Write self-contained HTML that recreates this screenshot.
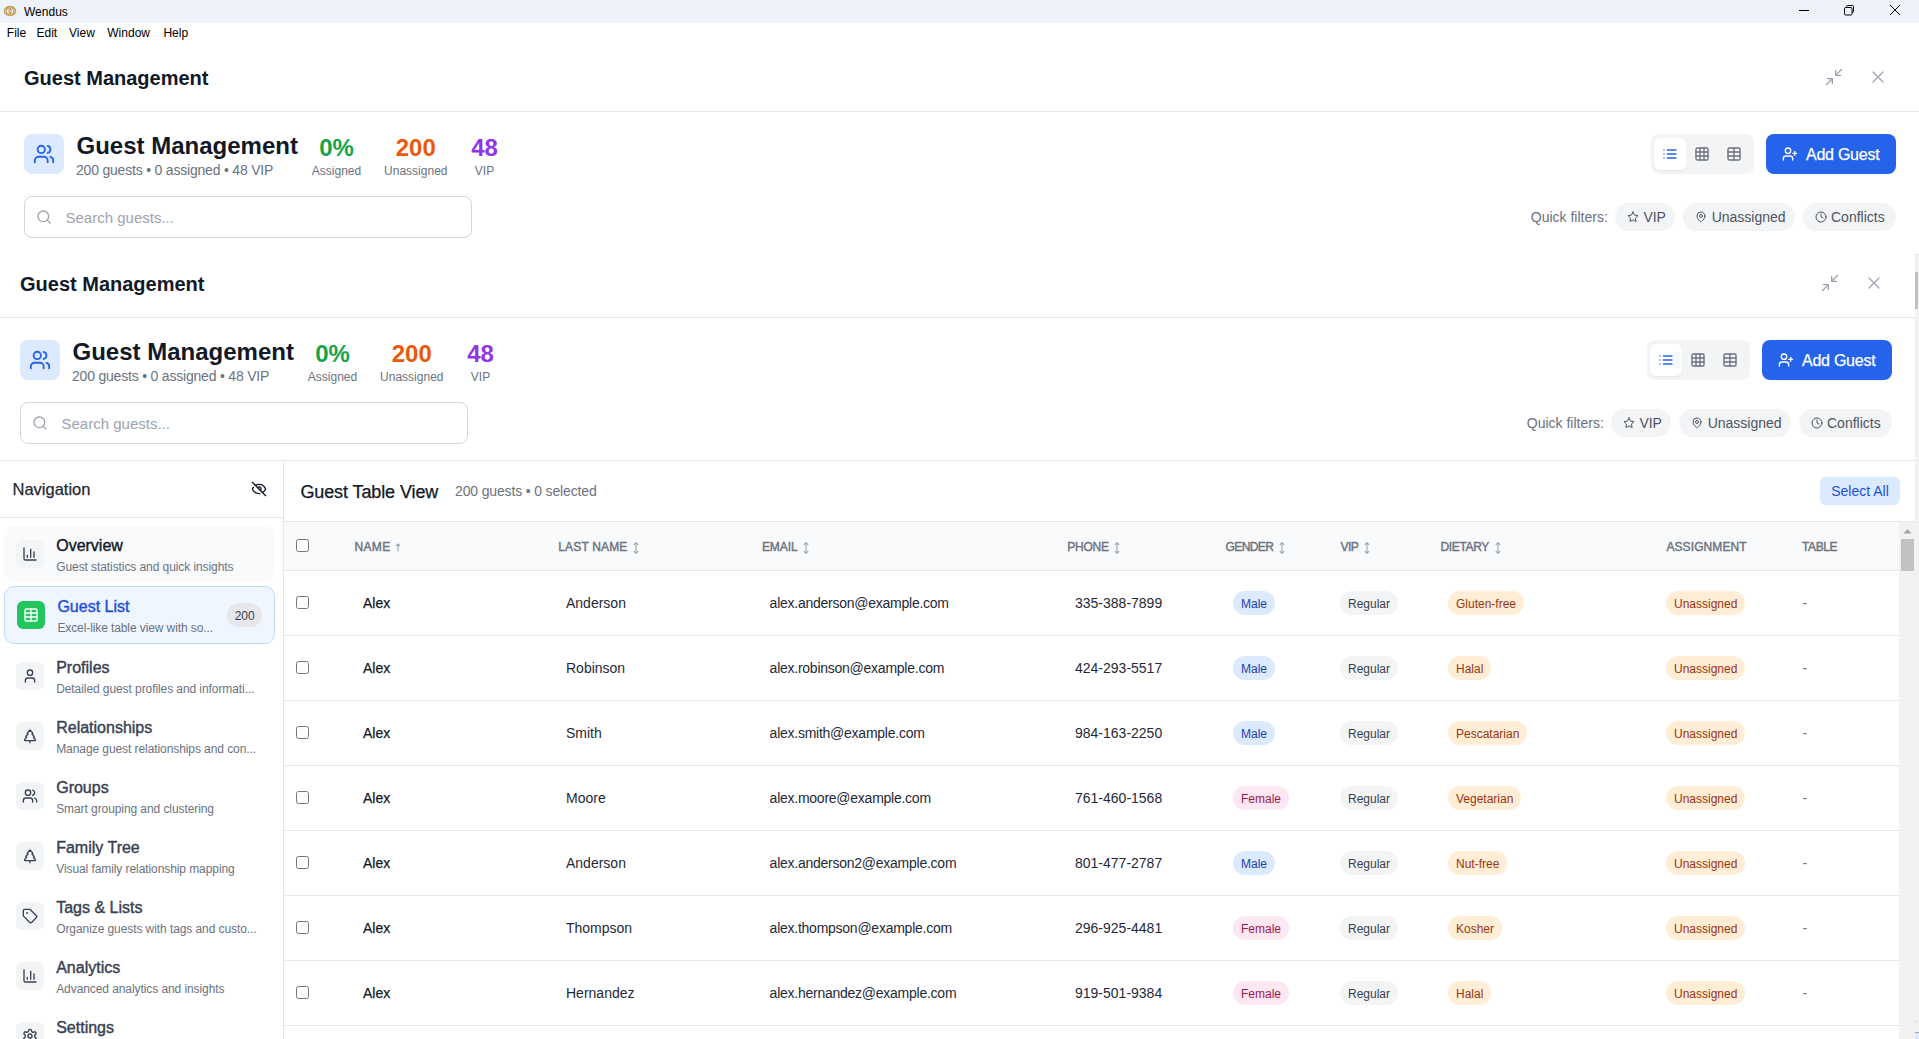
<!DOCTYPE html><html><head><meta charset="utf-8"><style>
*{margin:0;padding:0}
html,body{width:1919px;height:1039px;overflow:hidden;background:#fff;font-family:"Liberation Sans",sans-serif}
.t{position:absolute;line-height:1;white-space:nowrap}
.c{text-align:center}
.b{position:absolute}
.ic{position:absolute;display:block}
.pill{position:absolute;height:24px;line-height:26px;box-sizing:border-box;font-size:12px;padding:0 8px;border-radius:12px;white-space:nowrap}
</style></head><body><div class="b" style="left:0px;top:0px;width:1919px;height:23px;background:#eef2f9"></div><svg class="ic" style="left:3px;top:5px;width:14px;height:12px" viewBox="0 0 14 12"><ellipse cx="7" cy="6" rx="5.6" ry="4.4" fill="none" stroke="#c9a060" stroke-width="1.5"/><ellipse cx="5.6" cy="6" rx="2.4" ry="3.1" fill="none" stroke="#c9a060" stroke-width="1.1"/><ellipse cx="8.4" cy="6" rx="2.4" ry="3.1" fill="none" stroke="#c9a060" stroke-width="1.1"/></svg><div class="t" style="left:24px;top:5.7px;font-size:12px;color:#000;font-weight:400">Wendus</div><div class="b" style="left:1799px;top:10px;width:10px;height:1px;background:#000"></div><svg class="ic" style="left:1843px;top:4px;width:12px;height:12px" viewBox="0 0 12 12" fill="none" stroke="#000" stroke-width="1"><rect x="1.5" y="3.5" width="7.5" height="7.5" rx="1.2"/><path d="M3.5 3.5V2.7A1.2 1.2 0 0 1 4.7 1.5H9.3A1.2 1.2 0 0 1 10.5 2.7V7.3A1.2 1.2 0 0 1 9.3 8.5H9"/></svg><svg class="ic" style="left:1889px;top:4px;width:12px;height:12px" viewBox="0 0 12 12" fill="none" stroke="#000" stroke-width="1"><path d="M1 1L11 11M11 1L1 11"/></svg><div class="t" style="left:6.8px;top:26.5px;font-size:12px;color:#000;font-weight:400">File</div><div class="t" style="left:36.5px;top:26.5px;font-size:12px;color:#000;font-weight:400">Edit</div><div class="t" style="left:69px;top:26.5px;font-size:12px;color:#000;font-weight:400">View</div><div class="t" style="left:107.3px;top:26.5px;font-size:12px;color:#000;font-weight:400">Window</div><div class="t" style="left:163.4px;top:26.5px;font-size:12px;color:#000;font-weight:400">Help</div><div class="t" style="left:24px;top:68.4px;font-size:20px;color:#111827;font-weight:700">Guest Management</div><svg class="ic" style="left:1824.3px;top:67px;width:20px;height:20px;color:#9ca3af" viewBox="0 0 24 24" fill="none" stroke="currentColor" stroke-width="1.6" stroke-linecap="round" stroke-linejoin="round"><polyline points="4 14 10 14 10 20"/><polyline points="20 10 14 10 14 4"/><line x1="14" x2="21" y1="10" y2="3"/><line x1="3" x2="10" y1="21" y2="14"/></svg><svg class="ic" style="left:1868px;top:66.75px;width:20px;height:20px;color:#9ca3af" viewBox="0 0 24 24" fill="none" stroke="currentColor" stroke-width="1.5" stroke-linecap="round" stroke-linejoin="round"><path d="M18 6 6 18"/><path d="m6 6 12 12"/></svg><div class="b" style="left:0px;top:111px;width:1920px;height:1px;background:#e5e7eb"></div><div class="b" style="left:24px;top:134px;width:40px;height:40px;background:#dbeafe;border-radius:8px"></div><svg class="ic" style="left:33px;top:142.5px;width:22px;height:22px;color:#2563eb" viewBox="0 0 24 24" fill="none" stroke="currentColor" stroke-width="2" stroke-linecap="round" stroke-linejoin="round"><path d="M16 21v-2a4 4 0 0 0-4-4H6a4 4 0 0 0-4 4v2"/><circle cx="9" cy="7" r="4"/><path d="M22 21v-2a4 4 0 0 0-3-3.87"/><path d="M16 3.13a4 4 0 0 1 0 7.75"/></svg><div class="t" style="left:76.5px;top:134.4px;font-size:24px;color:#111827;font-weight:700">Guest Management</div><div class="t" style="left:76px;top:163.2px;font-size:14px;color:#6b7280;font-weight:400;letter-spacing:-0.2px">200 guests &bull; 0 assigned &bull; 48 VIP</div><div class="t c" style="left:276.5px;top:135.7px;width:120px;font-size:24px;color:#16a34a;font-weight:700">0%</div><div class="t c" style="left:276.5px;top:164.7px;width:120px;font-size:12px;color:#6b7280">Assigned</div><div class="t c" style="left:355.8px;top:135.7px;width:120px;font-size:24px;color:#ea580c;font-weight:700">200</div><div class="t c" style="left:355.8px;top:164.7px;width:120px;font-size:12px;color:#6b7280">Unassigned</div><div class="t c" style="left:424.5px;top:135.7px;width:120px;font-size:24px;color:#9333ea;font-weight:700">48</div><div class="t c" style="left:424.5px;top:164.7px;width:120px;font-size:12px;color:#6b7280">VIP</div><div class="b" style="left:1651px;top:134px;width:103px;height:40px;background:#f3f4f6;border-radius:8px"></div><div class="b" style="left:1654px;top:138px;width:32px;height:32px;background:#fff;border-radius:6px;box-shadow:0 1px 2px rgba(0,0,0,.06)"></div><svg class="ic" style="left:1662px;top:146px;width:16px;height:16px;color:#2563eb" viewBox="0 0 24 24" fill="none" stroke="currentColor" stroke-width="2" stroke-linecap="round" stroke-linejoin="round"><line x1="8" x2="21" y1="6" y2="6"/><line x1="8" x2="21" y1="12" y2="12"/><line x1="8" x2="21" y1="18" y2="18"/><line x1="3" x2="3.01" y1="6" y2="6"/><line x1="3" x2="3.01" y1="12" y2="12"/><line x1="3" x2="3.01" y1="18" y2="18"/></svg><svg class="ic" style="left:1694px;top:146px;width:16px;height:16px;color:#6b7280" viewBox="0 0 24 24" fill="none" stroke="currentColor" stroke-width="2" stroke-linecap="round" stroke-linejoin="round"><rect width="18" height="18" x="3" y="3" rx="2"/><path d="M3 9h18"/><path d="M3 15h18"/><path d="M9 3v18"/><path d="M15 3v18"/></svg><svg class="ic" style="left:1726px;top:146px;width:16px;height:16px;color:#6b7280" viewBox="0 0 24 24" fill="none" stroke="currentColor" stroke-width="2" stroke-linecap="round" stroke-linejoin="round"><rect width="18" height="18" x="3" y="3" rx="2"/><path d="M3 9h18"/><path d="M3 15h18"/><path d="M12 3v18"/></svg><div class="b" style="left:1766px;top:134px;width:130px;height:40px;background:#2563eb;border-radius:8px"></div><svg class="ic" style="left:1782px;top:146px;width:16px;height:16px;color:#ffffff" viewBox="0 0 24 24" fill="none" stroke="currentColor" stroke-width="2" stroke-linecap="round" stroke-linejoin="round"><path d="M16 21v-2a4 4 0 0 0-4-4H6a4 4 0 0 0-4 4v2"/><circle cx="9" cy="7" r="4"/><line x1="19" x2="19" y1="8" y2="14"/><line x1="22" x2="16" y1="11" y2="11"/></svg><div class="t" style="left:1806px;top:146.5px;font-size:16px;color:#ffffff;font-weight:400;-webkit-text-stroke:0.25px #ffffff;letter-spacing:-0.25px">Add Guest</div><div class="b" style="left:24px;top:196px;width:448px;height:42px;border:1px solid #d1d5db;border-radius:8px;box-sizing:border-box;background:#fff"></div><svg class="ic" style="left:36px;top:209px;width:16px;height:16px;color:#9ca3af" viewBox="0 0 24 24" fill="none" stroke="currentColor" stroke-width="2" stroke-linecap="round" stroke-linejoin="round"><circle cx="11" cy="11" r="8"/><path d="m21 21-4.3-4.3"/></svg><div class="t" style="left:65.5px;top:210.3px;font-size:15px;color:#9ca3af;font-weight:400">Search guests...</div><div class="t" style="left:1530.8px;top:209.9px;font-size:14px;color:#6b7280;font-weight:400">Quick filters:</div><div class="b" style="left:1615px;top:203px;width:60px;height:28px;background:#f3f4f6;border-radius:14px"></div><svg class="ic" style="left:1627px;top:211px;width:12px;height:12px;color:#4b5563" viewBox="0 0 24 24" fill="none" stroke="currentColor" stroke-width="2" stroke-linecap="round" stroke-linejoin="round"><polygon points="12 2 15.09 8.26 22 9.27 17 14.14 18.18 21.02 12 17.77 5.82 21.02 7 14.14 2 9.27 8.91 8.26 12 2"/></svg><div class="t" style="left:1643.4px;top:210.2px;font-size:14px;color:#4b5563;font-weight:400">VIP</div><div class="b" style="left:1683px;top:203px;width:112px;height:28px;background:#f3f4f6;border-radius:14px"></div><svg class="ic" style="left:1695px;top:211px;width:12px;height:12px;color:#4b5563" viewBox="0 0 24 24" fill="none" stroke="currentColor" stroke-width="2" stroke-linecap="round" stroke-linejoin="round"><path d="M20 10c0 6-8 12-8 12s-8-6-8-12a8 8 0 0 1 16 0Z"/><circle cx="12" cy="10" r="3"/></svg><div class="t" style="left:1711.7px;top:210.2px;font-size:14px;color:#4b5563;font-weight:400">Unassigned</div><div class="b" style="left:1803px;top:203px;width:93px;height:28px;background:#f3f4f6;border-radius:14px"></div><svg class="ic" style="left:1815px;top:211px;width:12px;height:12px;color:#4b5563" viewBox="0 0 24 24" fill="none" stroke="currentColor" stroke-width="2" stroke-linecap="round" stroke-linejoin="round"><circle cx="12" cy="12" r="10"/><polyline points="12 6 12 12 16 14"/></svg><div class="t" style="left:1831px;top:210.2px;font-size:14px;color:#4b5563;font-weight:400">Conflicts</div><div class="b" style="left:0px;top:254px;width:1924px;height:1px;background:#e5e7eb"></div><div class="b" style="left:0;top:254px;width:1915px;height:785px;overflow:hidden;background:#fff"><div class="b" style="left:0;top:-254px;width:1915px;height:1039px"><div class="t" style="left:20px;top:274.4px;font-size:20px;color:#111827;font-weight:700">Guest Management</div><svg class="ic" style="left:1820.3px;top:273px;width:20px;height:20px;color:#9ca3af" viewBox="0 0 24 24" fill="none" stroke="currentColor" stroke-width="1.6" stroke-linecap="round" stroke-linejoin="round"><polyline points="4 14 10 14 10 20"/><polyline points="20 10 14 10 14 4"/><line x1="14" x2="21" y1="10" y2="3"/><line x1="3" x2="10" y1="21" y2="14"/></svg><svg class="ic" style="left:1864px;top:272.75px;width:20px;height:20px;color:#9ca3af" viewBox="0 0 24 24" fill="none" stroke="currentColor" stroke-width="1.5" stroke-linecap="round" stroke-linejoin="round"><path d="M18 6 6 18"/><path d="m6 6 12 12"/></svg><div class="b" style="left:-4px;top:317px;width:1920px;height:1px;background:#e5e7eb"></div><div class="b" style="left:20px;top:340px;width:40px;height:40px;background:#dbeafe;border-radius:8px"></div><svg class="ic" style="left:29px;top:348.5px;width:22px;height:22px;color:#2563eb" viewBox="0 0 24 24" fill="none" stroke="currentColor" stroke-width="2" stroke-linecap="round" stroke-linejoin="round"><path d="M16 21v-2a4 4 0 0 0-4-4H6a4 4 0 0 0-4 4v2"/><circle cx="9" cy="7" r="4"/><path d="M22 21v-2a4 4 0 0 0-3-3.87"/><path d="M16 3.13a4 4 0 0 1 0 7.75"/></svg><div class="t" style="left:72.5px;top:340.4px;font-size:24px;color:#111827;font-weight:700">Guest Management</div><div class="t" style="left:72px;top:369.2px;font-size:14px;color:#6b7280;font-weight:400;letter-spacing:-0.2px">200 guests &bull; 0 assigned &bull; 48 VIP</div><div class="t c" style="left:272.5px;top:341.7px;width:120px;font-size:24px;color:#16a34a;font-weight:700">0%</div><div class="t c" style="left:272.5px;top:370.7px;width:120px;font-size:12px;color:#6b7280">Assigned</div><div class="t c" style="left:351.8px;top:341.7px;width:120px;font-size:24px;color:#ea580c;font-weight:700">200</div><div class="t c" style="left:351.8px;top:370.7px;width:120px;font-size:12px;color:#6b7280">Unassigned</div><div class="t c" style="left:420.5px;top:341.7px;width:120px;font-size:24px;color:#9333ea;font-weight:700">48</div><div class="t c" style="left:420.5px;top:370.7px;width:120px;font-size:12px;color:#6b7280">VIP</div><div class="b" style="left:1647px;top:340px;width:103px;height:40px;background:#f3f4f6;border-radius:8px"></div><div class="b" style="left:1650px;top:344px;width:32px;height:32px;background:#fff;border-radius:6px;box-shadow:0 1px 2px rgba(0,0,0,.06)"></div><svg class="ic" style="left:1658px;top:352px;width:16px;height:16px;color:#2563eb" viewBox="0 0 24 24" fill="none" stroke="currentColor" stroke-width="2" stroke-linecap="round" stroke-linejoin="round"><line x1="8" x2="21" y1="6" y2="6"/><line x1="8" x2="21" y1="12" y2="12"/><line x1="8" x2="21" y1="18" y2="18"/><line x1="3" x2="3.01" y1="6" y2="6"/><line x1="3" x2="3.01" y1="12" y2="12"/><line x1="3" x2="3.01" y1="18" y2="18"/></svg><svg class="ic" style="left:1690px;top:352px;width:16px;height:16px;color:#6b7280" viewBox="0 0 24 24" fill="none" stroke="currentColor" stroke-width="2" stroke-linecap="round" stroke-linejoin="round"><rect width="18" height="18" x="3" y="3" rx="2"/><path d="M3 9h18"/><path d="M3 15h18"/><path d="M9 3v18"/><path d="M15 3v18"/></svg><svg class="ic" style="left:1722px;top:352px;width:16px;height:16px;color:#6b7280" viewBox="0 0 24 24" fill="none" stroke="currentColor" stroke-width="2" stroke-linecap="round" stroke-linejoin="round"><rect width="18" height="18" x="3" y="3" rx="2"/><path d="M3 9h18"/><path d="M3 15h18"/><path d="M12 3v18"/></svg><div class="b" style="left:1762px;top:340px;width:130px;height:40px;background:#2563eb;border-radius:8px"></div><svg class="ic" style="left:1778px;top:352px;width:16px;height:16px;color:#ffffff" viewBox="0 0 24 24" fill="none" stroke="currentColor" stroke-width="2" stroke-linecap="round" stroke-linejoin="round"><path d="M16 21v-2a4 4 0 0 0-4-4H6a4 4 0 0 0-4 4v2"/><circle cx="9" cy="7" r="4"/><line x1="19" x2="19" y1="8" y2="14"/><line x1="22" x2="16" y1="11" y2="11"/></svg><div class="t" style="left:1802px;top:352.5px;font-size:16px;color:#ffffff;font-weight:400;-webkit-text-stroke:0.25px #ffffff;letter-spacing:-0.25px">Add Guest</div><div class="b" style="left:20px;top:402px;width:448px;height:42px;border:1px solid #d1d5db;border-radius:8px;box-sizing:border-box;background:#fff"></div><svg class="ic" style="left:32px;top:415px;width:16px;height:16px;color:#9ca3af" viewBox="0 0 24 24" fill="none" stroke="currentColor" stroke-width="2" stroke-linecap="round" stroke-linejoin="round"><circle cx="11" cy="11" r="8"/><path d="m21 21-4.3-4.3"/></svg><div class="t" style="left:61.5px;top:416.3px;font-size:15px;color:#9ca3af;font-weight:400">Search guests...</div><div class="t" style="left:1526.8px;top:415.9px;font-size:14px;color:#6b7280;font-weight:400">Quick filters:</div><div class="b" style="left:1611px;top:409px;width:60px;height:28px;background:#f3f4f6;border-radius:14px"></div><svg class="ic" style="left:1623px;top:417px;width:12px;height:12px;color:#4b5563" viewBox="0 0 24 24" fill="none" stroke="currentColor" stroke-width="2" stroke-linecap="round" stroke-linejoin="round"><polygon points="12 2 15.09 8.26 22 9.27 17 14.14 18.18 21.02 12 17.77 5.82 21.02 7 14.14 2 9.27 8.91 8.26 12 2"/></svg><div class="t" style="left:1639.4px;top:416.2px;font-size:14px;color:#4b5563;font-weight:400">VIP</div><div class="b" style="left:1679px;top:409px;width:112px;height:28px;background:#f3f4f6;border-radius:14px"></div><svg class="ic" style="left:1691px;top:417px;width:12px;height:12px;color:#4b5563" viewBox="0 0 24 24" fill="none" stroke="currentColor" stroke-width="2" stroke-linecap="round" stroke-linejoin="round"><path d="M20 10c0 6-8 12-8 12s-8-6-8-12a8 8 0 0 1 16 0Z"/><circle cx="12" cy="10" r="3"/></svg><div class="t" style="left:1707.7px;top:416.2px;font-size:14px;color:#4b5563;font-weight:400">Unassigned</div><div class="b" style="left:1799px;top:409px;width:93px;height:28px;background:#f3f4f6;border-radius:14px"></div><svg class="ic" style="left:1811px;top:417px;width:12px;height:12px;color:#4b5563" viewBox="0 0 24 24" fill="none" stroke="currentColor" stroke-width="2" stroke-linecap="round" stroke-linejoin="round"><circle cx="12" cy="12" r="10"/><polyline points="12 6 12 12 16 14"/></svg><div class="t" style="left:1827px;top:416.2px;font-size:14px;color:#4b5563;font-weight:400">Conflicts</div><div class="b" style="left:-4px;top:460px;width:1924px;height:1px;background:#e5e7eb"></div><div class="b" style="left:283px;top:461px;width:1px;height:600px;background:#e5e7eb"></div><div class="t" style="left:12.5px;top:481.3px;font-size:16.5px;color:#1f2937;font-weight:400;-webkit-text-stroke:0.25px #1f2937">Navigation</div><svg class="ic" style="left:251px;top:481px;width:16px;height:16px;color:#111827;transform:rotate(180deg)" viewBox="0 0 24 24" fill="none" stroke="currentColor" stroke-width="2" stroke-linecap="round" stroke-linejoin="round"><path d="M9.88 9.88a3 3 0 1 0 4.24 4.24"/><path d="M10.73 5.08A10.43 10.43 0 0 1 12 5c7 0 10 7 10 7a13.16 13.16 0 0 1-1.67 2.68"/><path d="M6.61 6.61A13.526 13.526 0 0 0 2 12s3 7 10 7a9.74 9.74 0 0 0 5.39-1.61"/><line x1="2" x2="22" y1="2" y2="22"/></svg><div class="b" style="left:0px;top:517px;width:283px;height:1px;background:#e5e7eb"></div><div class="b" style="left:4px;top:526px;width:271px;height:56px;background:#f9fafb;border-radius:10px"></div><div class="b" style="left:16px;top:540px;width:28px;height:28px;background:#f3f4f6;border-radius:6px"></div><svg class="ic" style="left:22px;top:546px;width:16px;height:16px;color:#374151" viewBox="0 0 24 24" fill="none" stroke="currentColor" stroke-width="2" stroke-linecap="round" stroke-linejoin="round"><path d="M3 3v16a2 2 0 0 0 2 2h16"/><path d="M18 17V9"/><path d="M13 17V5"/><path d="M8 17v-3"/></svg><div class="t" style="left:56.2px;top:538.46px;font-size:16px;color:#111827;font-weight:400;-webkit-text-stroke:0.4px #111827">Overview</div><div class="t" style="left:56.2px;top:560.84px;font-size:12px;color:#6b7280;font-weight:400;letter-spacing:-0.08px">Guest statistics and quick insights</div><div class="b" style="left:4px;top:586px;width:271px;height:58px;background:#eff6ff;border:1px solid #bfdbfe;border-radius:10px;box-sizing:border-box"></div><div class="b" style="left:17px;top:601px;width:28px;height:28px;background:#22c55e;border-radius:6px"></div><svg class="ic" style="left:23px;top:607px;width:16px;height:16px;color:#ffffff" viewBox="0 0 24 24" fill="none" stroke="currentColor" stroke-width="2" stroke-linecap="round" stroke-linejoin="round"><rect width="18" height="18" x="3" y="3" rx="2"/><path d="M3 9h18"/><path d="M3 15h18"/><path d="M12 3v18"/></svg><div class="t" style="left:57.4px;top:599.46px;font-size:16px;color:#1d4ed8;font-weight:400;-webkit-text-stroke:0.4px #1d4ed8">Guest List</div><div class="t" style="left:57.4px;top:621.84px;font-size:12px;color:#6b7280;font-weight:400;letter-spacing:-0.1px">Excel-like table view with so...</div><div class="t c" style="left:227.4px;top:603px;width:34.6px;height:24px;line-height:26.5px;border-radius:12px;background:#e5e7eb;font-size:12px;color:#374151">200</div><div class="b" style="left:16px;top:662px;width:28px;height:28px;background:#f3f4f6;border-radius:6px"></div><svg class="ic" style="left:22px;top:668px;width:16px;height:16px;color:#374151" viewBox="0 0 24 24" fill="none" stroke="currentColor" stroke-width="2" stroke-linecap="round" stroke-linejoin="round"><path d="M19 21v-2a4 4 0 0 0-4-4H9a4 4 0 0 0-4 4v2"/><circle cx="12" cy="7" r="4"/></svg><div class="t" style="left:56.2px;top:660.46px;font-size:16px;color:#374151;font-weight:400;-webkit-text-stroke:0.4px #374151">Profiles</div><div class="t" style="left:56.2px;top:682.84px;font-size:12px;color:#6b7280;font-weight:400;letter-spacing:-0.08px">Detailed guest profiles and informati...</div><div class="b" style="left:16px;top:722px;width:28px;height:28px;background:#f3f4f6;border-radius:6px"></div><svg class="ic" style="left:22px;top:728px;width:16px;height:16px;color:#374151" viewBox="0 0 24 24" fill="none" stroke="currentColor" stroke-width="2" stroke-linecap="round" stroke-linejoin="round"><path d="m17 14 3 3.3a1 1 0 0 1-.7 1.7H4.7a1 1 0 0 1-.7-1.7L7 14h-.3a1 1 0 0 1-.7-1.7L9 9h-.2A1 1 0 0 1 8 7.3L12 3l4 4.3a1 1 0 0 1-.8 1.7H15l3 3.3a1 1 0 0 1-.7 1.7H17Z"/><path d="M12 22v-3"/></svg><div class="t" style="left:56.2px;top:720.46px;font-size:16px;color:#374151;font-weight:400;-webkit-text-stroke:0.4px #374151">Relationships</div><div class="t" style="left:56.2px;top:742.84px;font-size:12px;color:#6b7280;font-weight:400;letter-spacing:-0.08px">Manage guest relationships and con...</div><div class="b" style="left:16px;top:782px;width:28px;height:28px;background:#f3f4f6;border-radius:6px"></div><svg class="ic" style="left:22px;top:788px;width:16px;height:16px;color:#374151" viewBox="0 0 24 24" fill="none" stroke="currentColor" stroke-width="2" stroke-linecap="round" stroke-linejoin="round"><path d="M16 21v-2a4 4 0 0 0-4-4H6a4 4 0 0 0-4 4v2"/><circle cx="9" cy="7" r="4"/><path d="M22 21v-2a4 4 0 0 0-3-3.87"/><path d="M16 3.13a4 4 0 0 1 0 7.75"/></svg><div class="t" style="left:56.2px;top:780.46px;font-size:16px;color:#374151;font-weight:400;-webkit-text-stroke:0.4px #374151">Groups</div><div class="t" style="left:56.2px;top:802.84px;font-size:12px;color:#6b7280;font-weight:400;letter-spacing:-0.08px">Smart grouping and clustering</div><div class="b" style="left:16px;top:842px;width:28px;height:28px;background:#f3f4f6;border-radius:6px"></div><svg class="ic" style="left:22px;top:848px;width:16px;height:16px;color:#374151" viewBox="0 0 24 24" fill="none" stroke="currentColor" stroke-width="2" stroke-linecap="round" stroke-linejoin="round"><path d="m17 14 3 3.3a1 1 0 0 1-.7 1.7H4.7a1 1 0 0 1-.7-1.7L7 14h-.3a1 1 0 0 1-.7-1.7L9 9h-.2A1 1 0 0 1 8 7.3L12 3l4 4.3a1 1 0 0 1-.8 1.7H15l3 3.3a1 1 0 0 1-.7 1.7H17Z"/><path d="M12 22v-3"/></svg><div class="t" style="left:56.2px;top:840.46px;font-size:16px;color:#374151;font-weight:400;-webkit-text-stroke:0.4px #374151">Family Tree</div><div class="t" style="left:56.2px;top:862.84px;font-size:12px;color:#6b7280;font-weight:400;letter-spacing:-0.08px">Visual family relationship mapping</div><div class="b" style="left:16px;top:902px;width:28px;height:28px;background:#f3f4f6;border-radius:6px"></div><svg class="ic" style="left:22px;top:908px;width:16px;height:16px;color:#374151" viewBox="0 0 24 24" fill="none" stroke="currentColor" stroke-width="2" stroke-linecap="round" stroke-linejoin="round"><path d="M12.586 2.586A2 2 0 0 0 11.172 2H4a2 2 0 0 0-2 2v7.172a2 2 0 0 0 .586 1.414l8.704 8.704a2.426 2.426 0 0 0 3.42 0l6.58-6.58a2.426 2.426 0 0 0 0-3.42z"/><circle cx="7.5" cy="7.5" r=".5" fill="currentColor"/></svg><div class="t" style="left:56.2px;top:900.46px;font-size:16px;color:#374151;font-weight:400;-webkit-text-stroke:0.4px #374151">Tags &amp; Lists</div><div class="t" style="left:56.2px;top:922.84px;font-size:12px;color:#6b7280;font-weight:400;letter-spacing:-0.08px">Organize guests with tags and custo...</div><div class="b" style="left:16px;top:962px;width:28px;height:28px;background:#f3f4f6;border-radius:6px"></div><svg class="ic" style="left:22px;top:968px;width:16px;height:16px;color:#374151" viewBox="0 0 24 24" fill="none" stroke="currentColor" stroke-width="2" stroke-linecap="round" stroke-linejoin="round"><path d="M3 3v16a2 2 0 0 0 2 2h16"/><path d="M18 17V9"/><path d="M13 17V5"/><path d="M8 17v-3"/></svg><div class="t" style="left:56.2px;top:960.46px;font-size:16px;color:#374151;font-weight:400;-webkit-text-stroke:0.4px #374151">Analytics</div><div class="t" style="left:56.2px;top:982.84px;font-size:12px;color:#6b7280;font-weight:400;letter-spacing:-0.08px">Advanced analytics and insights</div><div class="b" style="left:16px;top:1022px;width:28px;height:28px;background:#f3f4f6;border-radius:6px"></div><svg class="ic" style="left:22px;top:1028px;width:16px;height:16px;color:#374151" viewBox="0 0 24 24" fill="none" stroke="currentColor" stroke-width="2" stroke-linecap="round" stroke-linejoin="round"><path d="M12.22 2h-.44a2 2 0 0 0-2 2v.18a2 2 0 0 1-1 1.73l-.43.25a2 2 0 0 1-2 0l-.15-.08a2 2 0 0 0-2.73.73l-.22.38a2 2 0 0 0 .73 2.73l.15.1a2 2 0 0 1 1 1.72v.51a2 2 0 0 1-1 1.74l-.15.09a2 2 0 0 0-.73 2.73l.22.38a2 2 0 0 0 2.73.73l.15-.08a2 2 0 0 1 2 0l.43.25a2 2 0 0 1 1 1.73V20a2 2 0 0 0 2 2h.44a2 2 0 0 0 2-2v-.18a2 2 0 0 1 1-1.73l.43-.25a2 2 0 0 1 2 0l.15.08a2 2 0 0 0 2.73-.73l.22-.39a2 2 0 0 0-.73-2.73l-.15-.08a2 2 0 0 1-1-1.74v-.5a2 2 0 0 1 1-1.74l.15-.09a2 2 0 0 0 .73-2.73l-.22-.38a2 2 0 0 0-2.73-.73l-.15.08a2 2 0 0 1-2 0l-.43-.25a2 2 0 0 1-1-1.73V4a2 2 0 0 0-2-2z"/><circle cx="12" cy="12" r="3"/></svg><div class="t" style="left:56.2px;top:1020.46px;font-size:16px;color:#374151;font-weight:400;-webkit-text-stroke:0.4px #374151">Settings</div><div class="t" style="left:300.4px;top:482.5px;font-size:18px;color:#111827;font-weight:400;-webkit-text-stroke:0.25px #111827;letter-spacing:-0.1px">Guest Table View</div><div class="t" style="left:455px;top:484.1px;font-size:14px;color:#6b7280;font-weight:400;letter-spacing:-0.15px">200 guests &bull; 0 selected</div><div class="t c" style="left:1820px;top:477px;width:80px;height:28px;line-height:28px;border-radius:6px;background:#dbeafe;font-size:14px;color:#1d4ed8">Select All</div><div class="b" style="left:284px;top:521px;width:1631px;height:1px;background:#e5e7eb"></div><div class="b" style="left:284px;top:522px;width:1615px;height:48px;background:#f9fafb"></div><div class="b" style="left:284px;top:570px;width:1615px;height:1px;background:#e5e7eb"></div><div class="b" style="left:296px;top:539px;width:13px;height:13px;border:1px solid #767676;border-radius:2.5px;box-sizing:border-box;background:#fff"></div><div class="t" style="left:354.6px;top:541.1px;font-size:12px;color:#6b7280;font-weight:400;-webkit-text-stroke:0.4px #6b7280;letter-spacing:0.3px">NAME</div><div class="t" style="left:558.3px;top:541.1px;font-size:12px;color:#6b7280;font-weight:400;-webkit-text-stroke:0.4px #6b7280;letter-spacing:0.15px">LAST NAME</div><div class="t" style="left:761.9px;top:541.1px;font-size:12px;color:#6b7280;font-weight:400;-webkit-text-stroke:0.4px #6b7280;letter-spacing:-0.05px">EMAIL</div><div class="t" style="left:1067.2px;top:541.1px;font-size:12px;color:#6b7280;font-weight:400;-webkit-text-stroke:0.4px #6b7280;letter-spacing:-0.2px">PHONE</div><div class="t" style="left:1225.5px;top:541.1px;font-size:12px;color:#6b7280;font-weight:400;-webkit-text-stroke:0.4px #6b7280;letter-spacing:-0.6px">GENDER</div><div class="t" style="left:1340.5px;top:541.1px;font-size:12px;color:#6b7280;font-weight:400;-webkit-text-stroke:0.4px #6b7280;letter-spacing:-0.5px">VIP</div><div class="t" style="left:1440.4px;top:541.1px;font-size:12px;color:#6b7280;font-weight:400;-webkit-text-stroke:0.4px #6b7280;letter-spacing:-0.33px">DIETARY</div><div class="t" style="left:1666.4px;top:541.1px;font-size:12px;color:#6b7280;font-weight:400;-webkit-text-stroke:0.4px #6b7280;letter-spacing:0.1px">ASSIGNMENT</div><div class="t" style="left:1802px;top:541.1px;font-size:12px;color:#6b7280;font-weight:400;-webkit-text-stroke:0.4px #6b7280;letter-spacing:-0.38px">TABLE</div><svg class="ic" style="left:395.2px;top:542.5px;width:6px;height:10px" viewBox="0 0 6 10" fill="none" stroke="#9ca3af" stroke-width="1.1" stroke-linecap="butt" stroke-linejoin="miter"><path d="M3 8.4V1.2M1.1 3L3 1L4.9 3"/></svg><svg class="ic" style="left:632.5px;top:542px;width:6px;height:12px" viewBox="0 0 6 12" fill="none" stroke="#9ca3af" stroke-width="1.1" stroke-linecap="butt" stroke-linejoin="miter"><path d="M3 1V11M0.8 2.9L3 0.7L5.2 2.9M0.8 9.1L3 11.3L5.2 9.1"/></svg><svg class="ic" style="left:802.6px;top:542px;width:6px;height:12px" viewBox="0 0 6 12" fill="none" stroke="#9ca3af" stroke-width="1.1" stroke-linecap="butt" stroke-linejoin="miter"><path d="M3 1V11M0.8 2.9L3 0.7L5.2 2.9M0.8 9.1L3 11.3L5.2 9.1"/></svg><svg class="ic" style="left:1114px;top:542px;width:6px;height:12px" viewBox="0 0 6 12" fill="none" stroke="#9ca3af" stroke-width="1.1" stroke-linecap="butt" stroke-linejoin="miter"><path d="M3 1V11M0.8 2.9L3 0.7L5.2 2.9M0.8 9.1L3 11.3L5.2 9.1"/></svg><svg class="ic" style="left:1279px;top:542px;width:6px;height:12px" viewBox="0 0 6 12" fill="none" stroke="#9ca3af" stroke-width="1.1" stroke-linecap="butt" stroke-linejoin="miter"><path d="M3 1V11M0.8 2.9L3 0.7L5.2 2.9M0.8 9.1L3 11.3L5.2 9.1"/></svg><svg class="ic" style="left:1364.3px;top:542px;width:6px;height:12px" viewBox="0 0 6 12" fill="none" stroke="#9ca3af" stroke-width="1.1" stroke-linecap="butt" stroke-linejoin="miter"><path d="M3 1V11M0.8 2.9L3 0.7L5.2 2.9M0.8 9.1L3 11.3L5.2 9.1"/></svg><svg class="ic" style="left:1494.8px;top:542px;width:6px;height:12px" viewBox="0 0 6 12" fill="none" stroke="#9ca3af" stroke-width="1.1" stroke-linecap="butt" stroke-linejoin="miter"><path d="M3 1V11M0.8 2.9L3 0.7L5.2 2.9M0.8 9.1L3 11.3L5.2 9.1"/></svg><div class="b" style="left:284px;top:635px;width:1615px;height:1px;background:#e5e7eb"></div><div class="b" style="left:296px;top:596px;width:13px;height:13px;border:1px solid #767676;border-radius:2.5px;box-sizing:border-box;background:#fff"></div><div class="t" style="left:363px;top:596.1px;font-size:14px;color:#111827;font-weight:400;-webkit-text-stroke:0.25px #111827">Alex</div><div class="t" style="left:566px;top:596.1px;font-size:14px;color:#1f2937;font-weight:400">Anderson</div><div class="t" style="left:769.6px;top:596.1px;font-size:14px;color:#1f2937;font-weight:400;letter-spacing:-0.25px">alex.anderson@example.com</div><div class="t" style="left:1075px;top:596.1px;font-size:14px;color:#1f2937;font-weight:400">335-388-7899</div><div class="pill" style="left:1233px;top:591px;background:#dbeafe;color:#1e40af">Male</div><div class="pill" style="left:1340px;top:591px;background:#f3f4f6;color:#374151">Regular</div><div class="pill" style="left:1448px;top:591px;background:#ffedd5;color:#9a3412">Gluten-free</div><div class="pill" style="left:1666px;top:591px;background:#ffedd5;color:#9a3412">Unassigned</div><div class="t" style="left:1802.6px;top:596.1px;font-size:14px;color:#6b7280;font-weight:400">-</div><div class="b" style="left:284px;top:700px;width:1615px;height:1px;background:#e5e7eb"></div><div class="b" style="left:296px;top:661px;width:13px;height:13px;border:1px solid #767676;border-radius:2.5px;box-sizing:border-box;background:#fff"></div><div class="t" style="left:363px;top:661.1px;font-size:14px;color:#111827;font-weight:400;-webkit-text-stroke:0.25px #111827">Alex</div><div class="t" style="left:566px;top:661.1px;font-size:14px;color:#1f2937;font-weight:400">Robinson</div><div class="t" style="left:769.6px;top:661.1px;font-size:14px;color:#1f2937;font-weight:400;letter-spacing:-0.25px">alex.robinson@example.com</div><div class="t" style="left:1075px;top:661.1px;font-size:14px;color:#1f2937;font-weight:400">424-293-5517</div><div class="pill" style="left:1233px;top:656px;background:#dbeafe;color:#1e40af">Male</div><div class="pill" style="left:1340px;top:656px;background:#f3f4f6;color:#374151">Regular</div><div class="pill" style="left:1448px;top:656px;background:#ffedd5;color:#9a3412">Halal</div><div class="pill" style="left:1666px;top:656px;background:#ffedd5;color:#9a3412">Unassigned</div><div class="t" style="left:1802.6px;top:661.1px;font-size:14px;color:#6b7280;font-weight:400">-</div><div class="b" style="left:284px;top:765px;width:1615px;height:1px;background:#e5e7eb"></div><div class="b" style="left:296px;top:726px;width:13px;height:13px;border:1px solid #767676;border-radius:2.5px;box-sizing:border-box;background:#fff"></div><div class="t" style="left:363px;top:726.1px;font-size:14px;color:#111827;font-weight:400;-webkit-text-stroke:0.25px #111827">Alex</div><div class="t" style="left:566px;top:726.1px;font-size:14px;color:#1f2937;font-weight:400">Smith</div><div class="t" style="left:769.6px;top:726.1px;font-size:14px;color:#1f2937;font-weight:400;letter-spacing:-0.25px">alex.smith@example.com</div><div class="t" style="left:1075px;top:726.1px;font-size:14px;color:#1f2937;font-weight:400">984-163-2250</div><div class="pill" style="left:1233px;top:721px;background:#dbeafe;color:#1e40af">Male</div><div class="pill" style="left:1340px;top:721px;background:#f3f4f6;color:#374151">Regular</div><div class="pill" style="left:1448px;top:721px;background:#ffedd5;color:#9a3412">Pescatarian</div><div class="pill" style="left:1666px;top:721px;background:#ffedd5;color:#9a3412">Unassigned</div><div class="t" style="left:1802.6px;top:726.1px;font-size:14px;color:#6b7280;font-weight:400">-</div><div class="b" style="left:284px;top:830px;width:1615px;height:1px;background:#e5e7eb"></div><div class="b" style="left:296px;top:791px;width:13px;height:13px;border:1px solid #767676;border-radius:2.5px;box-sizing:border-box;background:#fff"></div><div class="t" style="left:363px;top:791.1px;font-size:14px;color:#111827;font-weight:400;-webkit-text-stroke:0.25px #111827">Alex</div><div class="t" style="left:566px;top:791.1px;font-size:14px;color:#1f2937;font-weight:400">Moore</div><div class="t" style="left:769.6px;top:791.1px;font-size:14px;color:#1f2937;font-weight:400;letter-spacing:-0.25px">alex.moore@example.com</div><div class="t" style="left:1075px;top:791.1px;font-size:14px;color:#1f2937;font-weight:400">761-460-1568</div><div class="pill" style="left:1233px;top:786px;background:#fce7f3;color:#9d174d">Female</div><div class="pill" style="left:1340px;top:786px;background:#f3f4f6;color:#374151">Regular</div><div class="pill" style="left:1448px;top:786px;background:#ffedd5;color:#9a3412">Vegetarian</div><div class="pill" style="left:1666px;top:786px;background:#ffedd5;color:#9a3412">Unassigned</div><div class="t" style="left:1802.6px;top:791.1px;font-size:14px;color:#6b7280;font-weight:400">-</div><div class="b" style="left:284px;top:895px;width:1615px;height:1px;background:#e5e7eb"></div><div class="b" style="left:296px;top:856px;width:13px;height:13px;border:1px solid #767676;border-radius:2.5px;box-sizing:border-box;background:#fff"></div><div class="t" style="left:363px;top:856.1px;font-size:14px;color:#111827;font-weight:400;-webkit-text-stroke:0.25px #111827">Alex</div><div class="t" style="left:566px;top:856.1px;font-size:14px;color:#1f2937;font-weight:400">Anderson</div><div class="t" style="left:769.6px;top:856.1px;font-size:14px;color:#1f2937;font-weight:400;letter-spacing:-0.25px">alex.anderson2@example.com</div><div class="t" style="left:1075px;top:856.1px;font-size:14px;color:#1f2937;font-weight:400">801-477-2787</div><div class="pill" style="left:1233px;top:851px;background:#dbeafe;color:#1e40af">Male</div><div class="pill" style="left:1340px;top:851px;background:#f3f4f6;color:#374151">Regular</div><div class="pill" style="left:1448px;top:851px;background:#ffedd5;color:#9a3412">Nut-free</div><div class="pill" style="left:1666px;top:851px;background:#ffedd5;color:#9a3412">Unassigned</div><div class="t" style="left:1802.6px;top:856.1px;font-size:14px;color:#6b7280;font-weight:400">-</div><div class="b" style="left:284px;top:960px;width:1615px;height:1px;background:#e5e7eb"></div><div class="b" style="left:296px;top:921px;width:13px;height:13px;border:1px solid #767676;border-radius:2.5px;box-sizing:border-box;background:#fff"></div><div class="t" style="left:363px;top:921.1px;font-size:14px;color:#111827;font-weight:400;-webkit-text-stroke:0.25px #111827">Alex</div><div class="t" style="left:566px;top:921.1px;font-size:14px;color:#1f2937;font-weight:400">Thompson</div><div class="t" style="left:769.6px;top:921.1px;font-size:14px;color:#1f2937;font-weight:400;letter-spacing:-0.25px">alex.thompson@example.com</div><div class="t" style="left:1075px;top:921.1px;font-size:14px;color:#1f2937;font-weight:400">296-925-4481</div><div class="pill" style="left:1233px;top:916px;background:#fce7f3;color:#9d174d">Female</div><div class="pill" style="left:1340px;top:916px;background:#f3f4f6;color:#374151">Regular</div><div class="pill" style="left:1448px;top:916px;background:#ffedd5;color:#9a3412">Kosher</div><div class="pill" style="left:1666px;top:916px;background:#ffedd5;color:#9a3412">Unassigned</div><div class="t" style="left:1802.6px;top:921.1px;font-size:14px;color:#6b7280;font-weight:400">-</div><div class="b" style="left:284px;top:1025px;width:1615px;height:1px;background:#e5e7eb"></div><div class="b" style="left:296px;top:986px;width:13px;height:13px;border:1px solid #767676;border-radius:2.5px;box-sizing:border-box;background:#fff"></div><div class="t" style="left:363px;top:986.1px;font-size:14px;color:#111827;font-weight:400;-webkit-text-stroke:0.25px #111827">Alex</div><div class="t" style="left:566px;top:986.1px;font-size:14px;color:#1f2937;font-weight:400">Hernandez</div><div class="t" style="left:769.6px;top:986.1px;font-size:14px;color:#1f2937;font-weight:400;letter-spacing:-0.25px">alex.hernandez@example.com</div><div class="t" style="left:1075px;top:986.1px;font-size:14px;color:#1f2937;font-weight:400">919-501-9384</div><div class="pill" style="left:1233px;top:981px;background:#fce7f3;color:#9d174d">Female</div><div class="pill" style="left:1340px;top:981px;background:#f3f4f6;color:#374151">Regular</div><div class="pill" style="left:1448px;top:981px;background:#ffedd5;color:#9a3412">Halal</div><div class="pill" style="left:1666px;top:981px;background:#ffedd5;color:#9a3412">Unassigned</div><div class="t" style="left:1802.6px;top:986.1px;font-size:14px;color:#6b7280;font-weight:400">-</div><div class="b" style="left:284px;top:1090px;width:1615px;height:1px;background:#e5e7eb"></div><div class="b" style="left:296px;top:1051px;width:13px;height:13px;border:1px solid #767676;border-radius:2.5px;box-sizing:border-box;background:#fff"></div><div class="t" style="left:363px;top:1051.1px;font-size:14px;color:#111827;font-weight:400;-webkit-text-stroke:0.25px #111827">Alex</div><div class="t" style="left:566px;top:1051.1px;font-size:14px;color:#1f2937;font-weight:400">Garcia</div><div class="t" style="left:769.6px;top:1051.1px;font-size:14px;color:#1f2937;font-weight:400;letter-spacing:-0.25px">alex.garcia@example.com</div><div class="t" style="left:1075px;top:1051.1px;font-size:14px;color:#1f2937;font-weight:400">555-123-4567</div><div class="pill" style="left:1233px;top:1046px;background:#dbeafe;color:#1e40af">Male</div><div class="pill" style="left:1340px;top:1046px;background:#f3f4f6;color:#374151">Regular</div><div class="pill" style="left:1448px;top:1046px;background:#ffedd5;color:#9a3412">None</div><div class="pill" style="left:1666px;top:1046px;background:#ffedd5;color:#9a3412">Unassigned</div><div class="t" style="left:1802.6px;top:1051.1px;font-size:14px;color:#6b7280;font-weight:400">-</div><div class="b" style="left:1899px;top:522px;width:16px;height:517px;background:#f1f1f1"></div><svg class="ic" style="left:1903px;top:528px;width:9px;height:6px" viewBox="0 0 9 6"><path d="M0.5 5.5L4.5 1L8.5 5.5Z" fill="#a3a3a3"/></svg><div class="b" style="left:1901px;top:539px;width:13px;height:32px;background:#c1c1c1"></div></div></div><div class="b" style="left:1915px;top:254px;width:4px;height:785px;background:#f1f1f1"></div><div class="b" style="left:1915px;top:272px;width:3px;height:37px;background:#c1c1c1"></div><div class="b" style="left:1915px;top:254px;width:4px;height:1px;background:#e2e6ee"></div><div class="b" style="left:1915px;top:1021px;width:1px;height:1px;background:#b0b0b0"></div><div class="b" style="left:1915px;top:1032px;width:4px;height:7px;background:#dbeafe;border-top:1px solid #9ca3af;box-sizing:border-box"></div></body></html>
